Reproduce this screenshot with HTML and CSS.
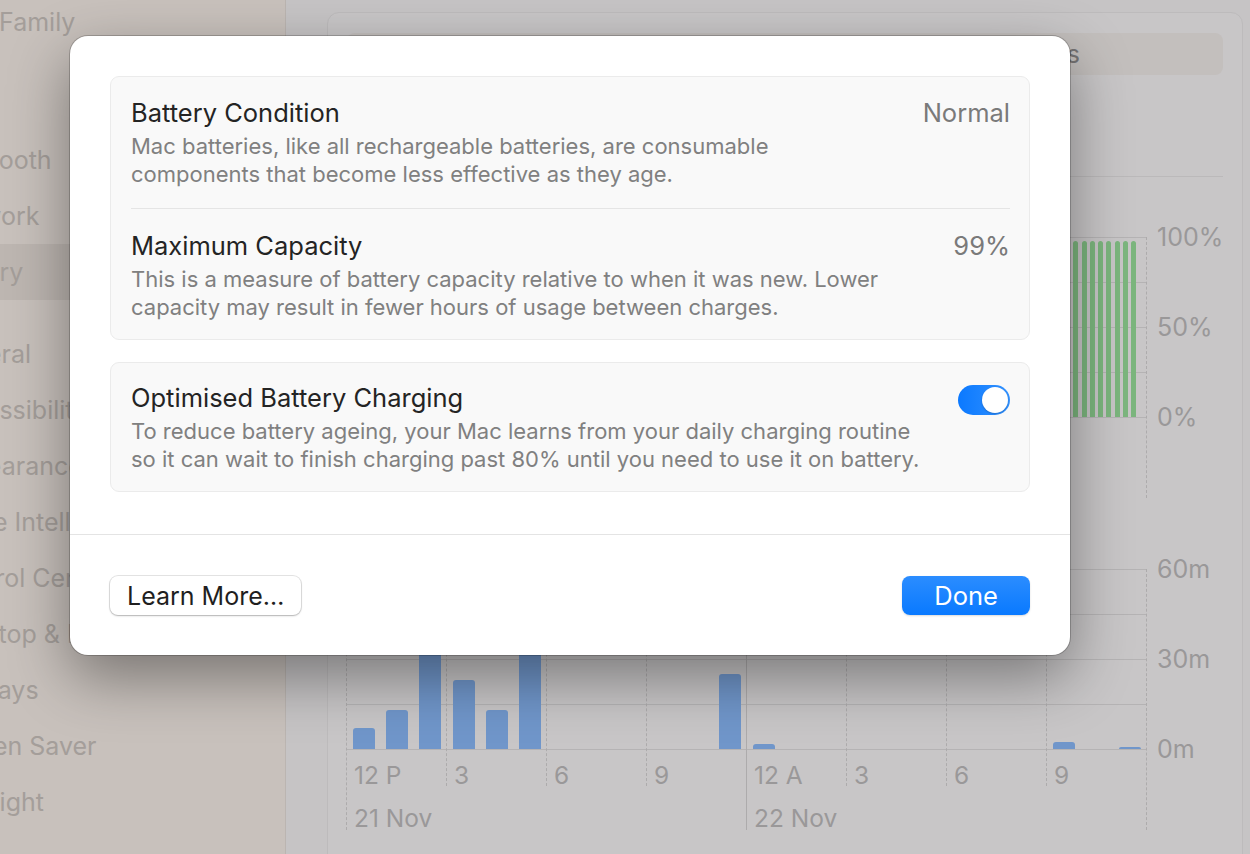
FILE: index.html
```html
<!DOCTYPE html>
<html lang="en">
<head>
    <meta charset="UTF-8">
    <meta name="viewport" content="width=device-width, initial-scale=1.0">
    <title>Battery Health</title>
    <link rel="stylesheet" href="styles.css">
</head>
<body>
    <div class="window">
        <aside class="sidebar">
            <div class="nav">
                <ul>
                    <li class="family">Family</li>
                </ul>
                <ul>
                    <li>Wi‑Fi</li>
                    <li>Bluetooth</li>
                    <li>Network</li>
                    <li class="active">Battery</li>
                </ul>
                <ul>
                    <li>General</li>
                    <li>Accessibility</li>
                    <li>Appearance</li>
                    <li>Apple Intelligence &amp; Siri</li>
                    <li>Control Centre</li>
                    <li>Desktop &amp; Dock</li>
                    <li>Displays</li>
                    <li>Screen Saver</li>
                    <li>Spotlight</li>
                </ul>
            </div>
        </aside>
        <main class="content">
            <section class="panel">
                <div class="segmented">
                    <span class="seg active"></span>
                    <span class="seg">Last 10 Days</span>
                </div>
                <div class="summary"></div>
                <div class="chart-head"></div>
                <div class="chart level">
                    <div class="cols" id="level-cols"></div>
                    <div class="edge"></div>
                    <div class="yaxis"><span>100%</span><span>50%</span><span>0%</span></div>
                </div>
                <div class="chart-head usage-head"></div>
                <div class="chart usage">
                    <div class="cols" id="usage-cols"></div>
                    <div class="edge"></div>
                    <div class="yaxis"><span>60m</span><span>30m</span><span>0m</span></div>
                </div>
            </section>
        </main>
    </div>

    <div class="dialog">
        <div class="dialog-body">
            <div class="card">
                <div class="row">
                    <div class="row-text">
                        <div class="row-title">Battery Condition</div>
                        <p class="row-desc">Mac batteries, like all rechargeable batteries, are consumable<br>components that become less effective as they age.</p>
                    </div>
                    <div class="row-value">Normal</div>
                </div>
                <div class="row">
                    <div class="row-text">
                        <div class="row-title">Maximum Capacity</div>
                        <p class="row-desc">This is a measure of battery capacity relative to when it was new. Lower<br>capacity may result in fewer hours of usage between charges.</p>
                    </div>
                    <div class="row-value">99%</div>
                </div>
            </div>
            <div class="card">
                <div class="row">
                    <div class="row-text">
                        <div class="row-title">Optimised Battery Charging</div>
                        <p class="row-desc">To reduce battery ageing, your Mac learns from your daily charging routine<br>so it can wait to finish charging past 80% until you need to use it on battery.</p>
                    </div>
                    <span class="toggle"><span class="knob"></span></span>
                </div>
            </div>
        </div>
        <div class="dialog-footer">
            <button class="btn">Learn More…</button>
            <button class="btn primary">Done</button>
        </div>
    </div>

    <script>
        const hours = ['12 P', '3', '6', '9', '12 A', '3', '6', '9'];
        const dates = { 0: '21 Nov', 4: '22 Nov' };

        // battery level, one value per 15 minutes (percent)
        const level = [];
        for (let i = 0; i < 96; i++) {
            level.push(i < 40 ? 100 - i * 1.2 : i < 52 ? 52 + (i - 40) * 4 : i < 95 ? 98 : 0);
        }

        // screen on usage, minutes per hour
        const usage = [7, 13, 45, 23, 13, 40, 0, 0, 0, 0, 0, 25, 1.7, 0, 0, 0, 0, 0, 0, 0, 0, 2.4, 0, 0.6];

        function buildChart(id, values, perCol, max, labels) {
            const box = document.getElementById(id);
            hours.forEach((label, i) => {
                const col = document.createElement('div');
                col.className = 'col';
                if (i in dates) col.className += ' day';
                if (i === 4) col.className += ' midnight';

                const plot = document.createElement('div');
                plot.className = 'col-plot';
                for (let j = 0; j < perCol; j++) {
                    const slot = document.createElement('div');
                    slot.className = 'slot';
                    const v = values[i * perCol + j];
                    if (v) {
                        const bar = document.createElement('div');
                        bar.className = 'bar';
                        bar.style.height = Math.max(1, v / max * 180) + 'px';
                        slot.appendChild(bar);
                    }
                    plot.appendChild(slot);
                }
                col.appendChild(plot);

                // the level chart's labels sit under the sheet, keep the room only
                const tick = document.createElement('div');
                tick.className = 'tick';
                if (labels) tick.textContent = label;
                col.appendChild(tick);

                if (i in dates) {
                    const date = document.createElement('div');
                    date.className = 'date';
                    if (labels) date.textContent = dates[i];
                    col.appendChild(date);
                }
                box.appendChild(col);
            });
        }

        buildChart('level-cols', level, 12, 100, false);
        buildChart('usage-cols', usage, 3, 60, true);
    </script>
</body>
</html>
```

FILE: styles.css
```css
* {
    box-sizing: border-box;
}
body {
    margin: 0;
    width: 1250px;
    height: 854px;
    overflow: hidden;
    position: relative;
    background: #c6c4c5;
    font-family: Inter, 'Noto Sans', sans-serif;
}

/* dimmed settings window behind the sheet */
.window {
    display: flex;
    height: 854px;
    overflow: hidden;
}
.sidebar {
    width: 286px;
    flex: none;
    background: #c8c1bc;
    border-right: 1px solid #bbb5b1;
    overflow: hidden;
}
.nav {
    margin: -6px 0 0 -61px;
    display: flex;
    flex-direction: column;
    gap: 26px;
}
.nav ul {
    list-style: none;
    margin: 0;
    padding: 0;
}
.nav li {
    height: 56px;
    line-height: 56px;
    font-size: 25px;
    color: #a49e9a;
    white-space: nowrap;
}
.nav li.family {
    padding-left: 60px;
}
.nav li.active {
    background: #bdb6b1;
    border-radius: 8px;
    margin-right: 10px;
}

.content {
    flex: 1;
    padding: 12px 7px 0 41px;
}
.panel {
    height: 860px;
    background: #c8c6c7;
    border: 1px solid #bdbbbc;
    border-radius: 12px;
    padding: 20px 19px 0 19px;
}
.segmented {
    display: flex;
    height: 42px;
    background: #c3bfbd;
    border-radius: 8px;
}
.seg {
    flex: 1;
    text-align: center;
    line-height: 42px;
    font-size: 25px;
    color: #767475;
}
.seg.active {
    background: #d2cfce;
    border-radius: 7px;
    margin: 3px;
}
.summary {
    height: 102px;
    border-bottom: 1px solid #bbb9ba;
}
.chart-head {
    height: 60px;
}
.usage-head {
    height: 71px;
}

/* charts */
.chart {
    display: flex;
    align-items: flex-start;
    margin-left: -1px;
}
.cols {
    display: flex;
    align-items: flex-start;
}
.col {
    box-sizing: content-box;
    width: 99px;
    border-left: 1px dashed #adabac;
}
.col.midnight {
    border-left-style: solid;
}
.col-plot {
    height: 181px;
    display: flex;
    padding-bottom: 1px;
    background: repeating-linear-gradient(to bottom, #b5b3b4 0 1px, transparent 1px 45px);
}
.slot {
    flex: 1;
    display: flex;
    justify-content: center;
    align-items: flex-end;
}
.bar {
    width: 22px;
    background: #7096ca;
    border-radius: 3px 3px 0 0;
}
.level .bar {
    width: 5px;
    background: #7cb67e;
    border-radius: 2.5px 2.5px 0 0;
}
.tick {
    height: 36px;
    padding: 13px 0 0 7px;
    font-size: 24.5px;
    line-height: 24px;
    color: #9a9899;
    white-space: nowrap;
}
.date {
    height: 44px;
    padding: 20px 0 0 7px;
    font-size: 24.5px;
    line-height: 24px;
    color: #9a9899;
    white-space: nowrap;
}
.edge {
    width: 1px;
    height: 261px;
    border-left: 1px dashed #adabac;
}
.yaxis {
    display: flex;
    flex-direction: column;
    justify-content: space-between;
    height: 204px;
    margin-top: -12px;
    padding-left: 10px;
    font-size: 25px;
    line-height: 24px;
    color: #9a9899;
}

/* the sheet */
.dialog {
    position: absolute;
    left: 70px;
    top: 36px;
    width: 1000px;
    background: #fff;
    border-radius: 18px;
    box-shadow: 0 0 0 1px rgba(0, 0, 0, 0.2), 0 22px 60px rgba(0, 0, 0, 0.4);
    overflow: hidden;
}
.dialog-body {
    padding: 40px 40px 42px;
    display: flex;
    flex-direction: column;
    gap: 22px;
}
.card {
    background: #f9f9f9;
    border: 1px solid #ebebeb;
    border-radius: 9px;
}
.row {
    display: flex;
    justify-content: space-between;
    align-items: flex-start;
    margin: 0 19px 0 20px;
    padding: 21px 0 20px;
}
.row + .row {
    border-top: 1px solid #e5e5e5;
    padding: 22px 0 18px;
}
.card:last-child .row {
    padding: 20px 0 18px;
}
.row-title {
    font-size: 25.5px;
    line-height: 30px;
    color: #242424;
}
.row-desc {
    margin: 4px 0 0;
    font-size: 22px;
    line-height: 28px;
    color: #808080;
}
.row-value {
    font-size: 25.5px;
    line-height: 30px;
    color: #7a7a7a;
}
.toggle {
    display: flex;
    justify-content: flex-end;
    width: 52px;
    height: 30px;
    margin-top: 2px;
    padding: 2px;
    border-radius: 15px;
    background: linear-gradient(to right, #0b79ff, #3392ff);
}
.knob {
    width: 26px;
    height: 26px;
    border-radius: 50%;
    background: #fff;
    box-shadow: 0 1px 2px rgba(0, 0, 0, 0.2);
}
.dialog-footer {
    display: flex;
    justify-content: space-between;
    border-top: 1px solid #e4e4e4;
    padding: 41px 40px 40px;
}
.btn {
    height: 39px;
    border: none;
    border-radius: 8px;
    padding: 0 17px;
    font-family: Inter, 'Noto Sans', sans-serif;
    font-size: 25px;
    color: #1f1f1f;
    background: #fff;
    box-shadow: 0 0 0 1px rgba(0, 0, 0, 0.1), 0 1px 2px rgba(0, 0, 0, 0.22);
}
.btn.primary {
    padding: 0 32px;
    color: #fff;
    font-size: 25.5px;
    background: linear-gradient(to bottom, #2b8dff, #0979ff);
    box-shadow: 0 1px 2px rgba(0, 0, 0, 0.15);
}
```
